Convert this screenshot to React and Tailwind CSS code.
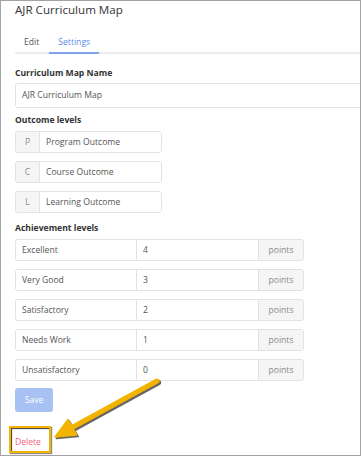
import React from "react";

const font = { fontFamily: '"Open Sans", "Noto Sans", sans-serif' };

function Field({ children, className = "" }) {
  return (
    <div
      className={`h-[22px] flex items-center border border-[#e2e2e2] bg-white px-[6px] text-[8.6px] text-[#555] ${className}`}
    >
      {children}
    </div>
  );
}

function OutcomeRow({ letter, label }) {
  return (
    <div className="flex w-[147px] h-[22px] rounded-[3px] border border-[#e2e2e2] overflow-hidden">
      <div className="w-[24px] flex items-center justify-center bg-[#f5f5f5] border-r border-[#e2e2e2] text-[8.6px] text-[#8a8a8a]">
        {letter}
      </div>
      <div className="flex-1 flex items-center px-[6px] text-[8.6px] text-[#555] bg-white">
        {label}
      </div>
    </div>
  );
}

function AchRow({ label, value }) {
  return (
    <div className="flex w-[289px] h-[22px] rounded-[3px] border border-[#e2e2e2] overflow-hidden">
      <div className="w-[121px] flex items-center px-[6px] text-[8.6px] text-[#555] bg-white border-r border-[#e2e2e2]">
        {label}
      </div>
      <div className="w-[122px] flex items-center px-[6px] text-[8.6px] text-[#555] bg-white border-r border-[#e2e2e2]">
        {value}
      </div>
      <div className="flex-1 flex items-center justify-center bg-[#f5f5f5] text-[8.6px] text-[#8a8a8a]">
        points
      </div>
    </div>
  );
}

export default function App() {
  return (
    <div
      style={font}
      className="relative w-[361px] h-[456px] border border-[#a3a3a3] bg-white overflow-hidden"
    >
      <div className="pl-[14px] pt-[1px] flex flex-col">
        <div className="h-[16px] flex items-center text-[11.6px] font-medium text-[#333]">
          AJR Curriculum Map
        </div>

        <div className="mt-[19px] flex gap-[1px] border-b-2 border-[#ececec] mr-[-40px]">
          <div className="px-[9px] pb-[3px] h-[17px] flex items-end text-[8.6px] text-[#555] -mb-[2px] border-b-2 border-transparent">
            Edit
          </div>
          <div className="px-[9px] pb-[3px] h-[17px] flex items-end text-[8.6px] text-[#5b8def] -mb-[2px] border-b-2 border-[#7ea5ec]">
            Settings
          </div>
        </div>

        <div className="mt-[13px] h-[12px] flex items-center text-[8.6px] font-bold text-[#333]">
          Curriculum Map Name
        </div>
        <Field className="mt-[4px] h-[25px] w-[360px] rounded-[3px]">AJR Curriculum Map</Field>

        <div className="mt-[6px] h-[12px] flex items-center text-[8.6px] font-bold text-[#333]">
          Outcome levels
        </div>
        <div className="mt-[5px] flex flex-col gap-[8px]">
          <OutcomeRow letter="P" label="Program Outcome" />
          <OutcomeRow letter="C" label="Course Outcome" />
          <OutcomeRow letter="L" label="Learning Outcome" />
        </div>

        <div className="mt-[9px] h-[12px] flex items-center text-[8.6px] font-bold text-[#333]">
          Achievement levels
        </div>
        <div className="mt-[5px] flex flex-col gap-[8px]">
          <AchRow label="Excellent" value="4" />
          <AchRow label="Very Good" value="3" />
          <AchRow label="Satisfactory" value="2" />
          <AchRow label="Needs Work" value="1" />
          <AchRow label="Unsatisfactory" value="0" />
        </div>

        <div className="mt-[7px] w-[38px] h-[24px] rounded-[3px] bg-[#a6c1f2] flex items-center justify-center text-[8.6px] text-white">
          Save
        </div>

        <div className="mt-[24px] h-[12px] flex items-center text-[8.6px] text-[#f0607a]">
          Delete
        </div>
      </div>

      {/* annotation box */}
      <div className="absolute left-[8px] top-[425px] w-[42px] h-[27px] border-[2px] border-[#f3b300] shadow-[inset_1px_1px_1px_#3a3a3a,1px_1px_1px_rgba(0,0,0,0.45)]" />

      {/* annotation arrow */}
      <svg
        className="absolute left-0 top-0 pointer-events-none"
        width="361"
        height="456"
        viewBox="0 0 361 456"
      >
        <g transform="translate(1.4,1.6)" opacity="0.75">
          <line x1="156" y1="380" x2="72" y2="426" stroke="#333" strokeWidth="5.5" strokeLinecap="round" />
          <polygon points="54,436 75.8,434 67,418.4" fill="#333" stroke="#333" strokeWidth="1.5" strokeLinejoin="round" />
        </g>
        <line x1="156" y1="380" x2="72" y2="426" stroke="#f2b400" strokeWidth="5" strokeLinecap="round" />
        <polygon points="54,436 75.8,434 67,418.4" fill="#f2b400" stroke="#f2b400" strokeWidth="1.5" strokeLinejoin="round" />
      </svg>
    </div>
  );
}
